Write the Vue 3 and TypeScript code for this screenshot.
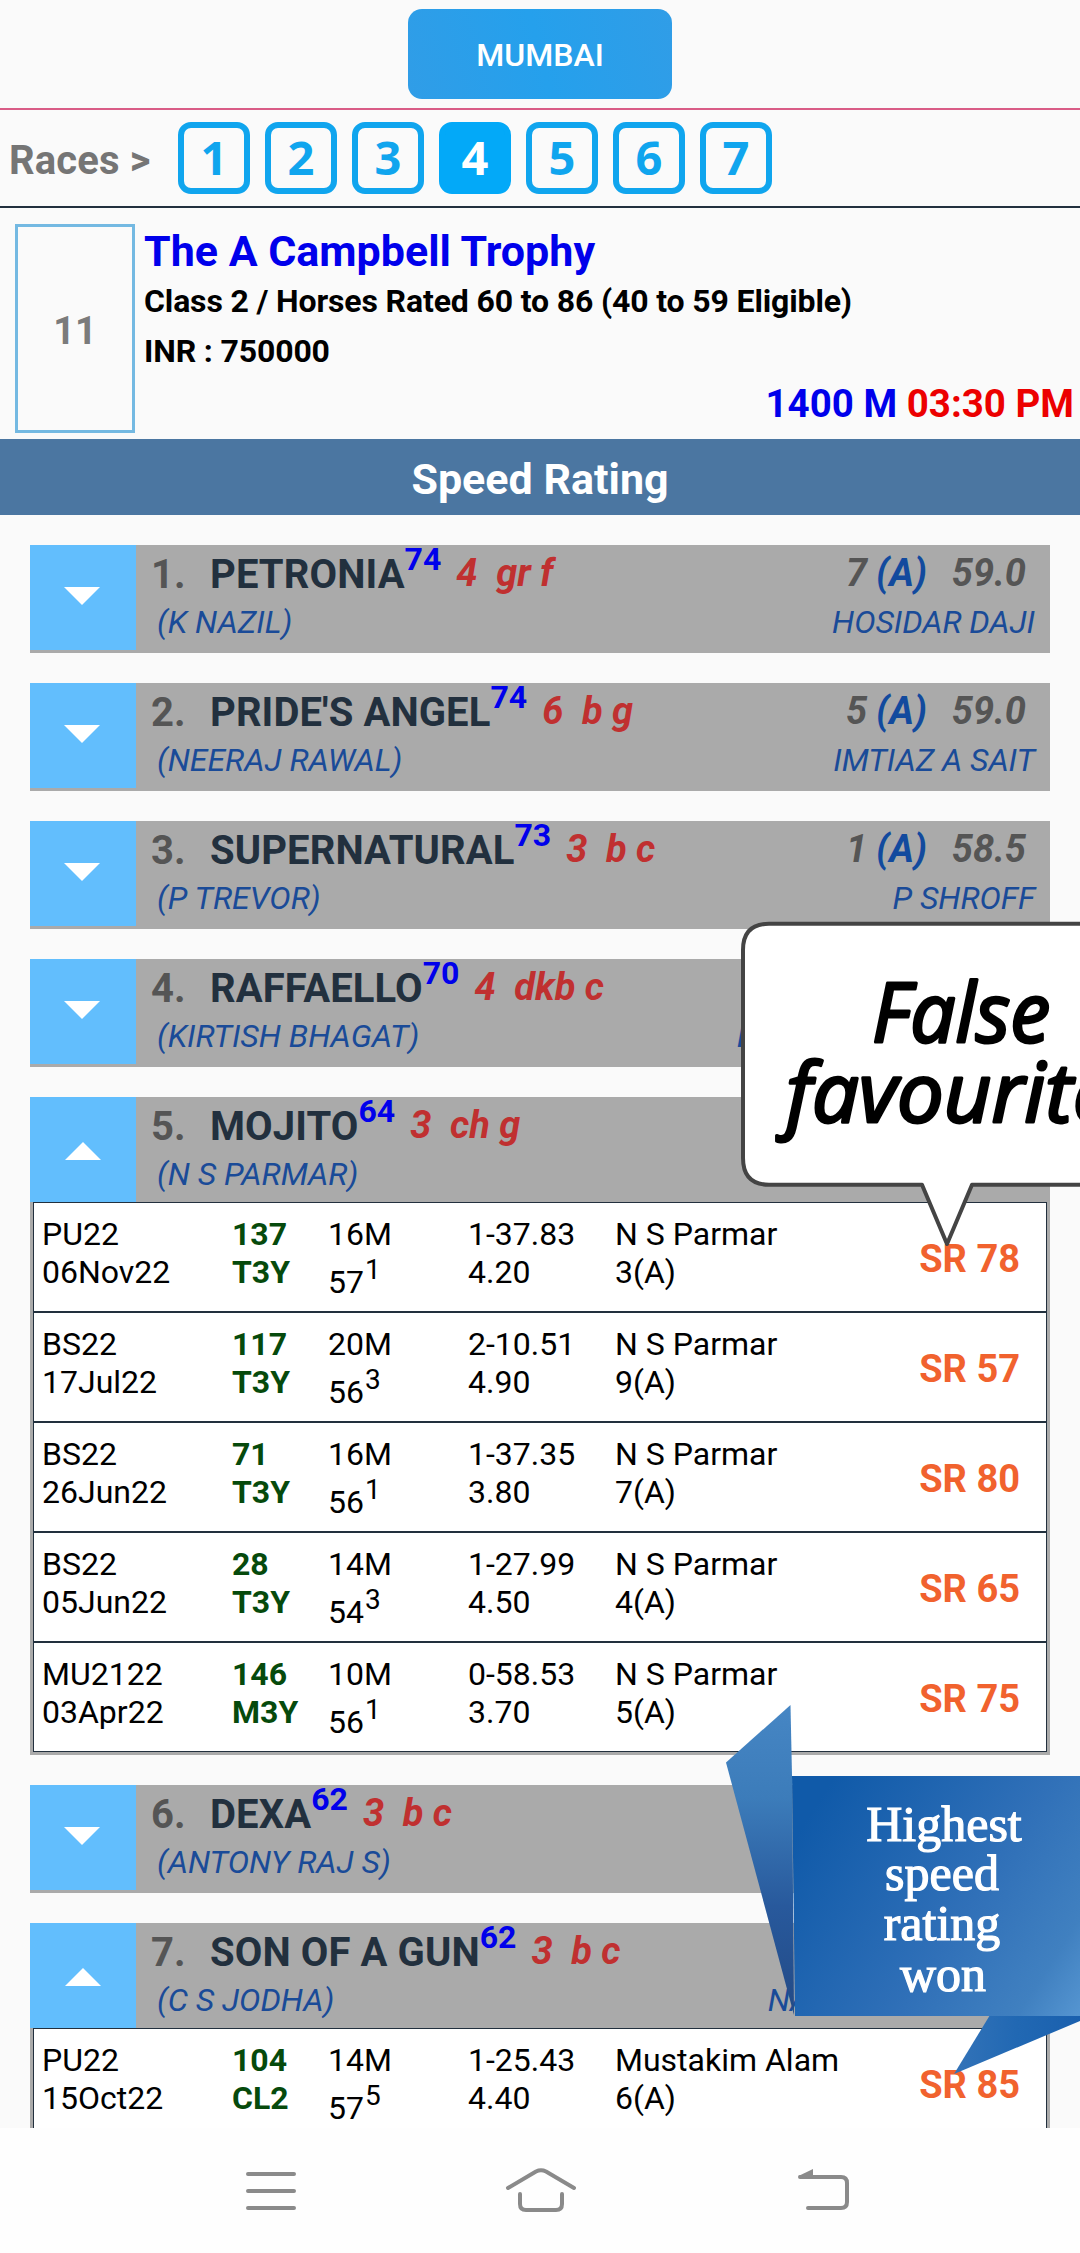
<script setup lang="ts">
interface Run {
  meet: string
  date: string
  raceNo: string
  cls: string
  dist: string
  wt: string
  pos: string
  time: string
  odds: string
  jockey: string
  draw: string
  sr: string
}
interface Horse {
  no: number
  name: string
  rating: string
  desc: string
  jockey: string
  draw?: string
  weight?: string
  trainer?: string
  runs?: Run[]
}

const races: number[] = [1, 2, 3, 4, 5, 6, 7]
const activeRace = 4

function run(
  meet: string, date: string, raceNo: string, cls: string, dist: string, wt: string, pos: string,
  time: string, odds: string, jockey: string, draw: string, sr: string,
): Run {
  return { meet, date, raceNo, cls, dist, wt, pos, time, odds, jockey, draw, sr }
}

const horses: Horse[] = [
  { no: 1, name: 'PETRONIA', rating: '74', desc: '4  gr f', jockey: '(K NAZIL)', draw: '7', weight: '59.0', trainer: 'HOSIDAR DAJI' },
  { no: 2, name: "PRIDE'S ANGEL", rating: '74', desc: '6  b g', jockey: '(NEERAJ RAWAL)', draw: '5', weight: '59.0', trainer: 'IMTIAZ A SAIT' },
  { no: 3, name: 'SUPERNATURAL', rating: '73', desc: '3  b c', jockey: '(P TREVOR)', draw: '1', weight: '58.5', trainer: 'P SHROFF' },
  { no: 4, name: 'RAFFAELLO', rating: '70', desc: '4  dkb c', jockey: '(KIRTISH BHAGAT)', trainer: 'DALLAS TODYWALLA' },
  {
    no: 5, name: 'MOJITO', rating: '64', desc: '3  ch g', jockey: '(N S PARMAR)',
    runs: [
      run('PU22', '06Nov22', '137', 'T3Y', '16M', '57', '1', '1-37.83', '4.20', 'N S Parmar', '3(A)', 'SR 78'),
      run('BS22', '17Jul22', '117', 'T3Y', '20M', '56', '3', '2-10.51', '4.90', 'N S Parmar', '9(A)', 'SR 57'),
      run('BS22', '26Jun22', '71', 'T3Y', '16M', '56', '1', '1-37.35', '3.80', 'N S Parmar', '7(A)', 'SR 80'),
      run('BS22', '05Jun22', '28', 'T3Y', '14M', '54', '3', '1-27.99', '4.50', 'N S Parmar', '4(A)', 'SR 65'),
      run('MU2122', '03Apr22', '146', 'M3Y', '10M', '56', '1', '0-58.53', '3.70', 'N S Parmar', '5(A)', 'SR 75'),
    ],
  },
  { no: 6, name: 'DEXA', rating: '62', desc: '3  b c', jockey: '(ANTONY RAJ S)' },
  {
    no: 7, name: 'SON OF A GUN', rating: '62', desc: '3  b c', jockey: '(C S JODHA)', trainer: 'NARENDRA LAGAD',
    runs: [
      run('PU22', '15Oct22', '104', 'CL2', '14M', '57', '5', '1-25.43', '4.40', 'Mustakim Alam', '6(A)', 'SR 85'),
    ],
  },
]
</script>

<template>
  <div class="screen">
    <div class="page">
      <header class="venue"><button class="venue-btn">MUMBAI</button></header>

      <nav class="races">
        <span class="races-label">Races &gt;</span>
        <div class="race-list">
          <span v-for="r in races" :key="r" class="race" :class="{ active: r === activeRace }">{{ r }}</span>
        </div>
      </nav>

      <section class="info">
        <div class="info-box">11</div>
        <div class="info-text">
          <h1>The A Campbell Trophy</h1>
          <p>Class 2 / Horses Rated 60 to 86 (40 to 59 Eligible)</p>
          <p class="inr">INR : 750000</p>
          <div class="when"><span class="blue">1400 M</span> <span class="red">03:30 PM</span></div>
        </div>
      </section>

      <h2 class="section-title">Speed Rating</h2>

      <main class="cards">
        <article v-for="h in horses" :key="h.no" class="card">
          <div class="head">
            <div class="toggle">
              <svg v-if="h.runs" class="up" width="36" height="18" viewBox="0 0 36 18"><path d="M0 18L18 0L36 18Z" fill="#fff" /></svg>
              <svg v-else width="36" height="18" viewBox="0 0 36 18"><path d="M0 0L18 18L36 0Z" fill="#fff" /></svg>
            </div>
            <div class="left">
              <div class="line1"><span class="no">{{ h.no }}.</span><span class="name">{{ h.name }}</span><span class="rating">{{ h.rating }}</span><span class="desc">{{ h.desc }}</span></div>
              <div class="jockey">{{ h.jockey }}</div>
            </div>
            <div class="right">
              <div class="line1r"><template v-if="h.draw"><span>{{ h.draw }}</span><span class="a">(A)</span><span class="wt">{{ h.weight }}</span></template></div>
              <div class="trainer">{{ h.trainer }}</div>
            </div>
          </div>
          <div v-if="h.runs" class="runs">
            <div v-for="r in h.runs" :key="r.date" class="run">
              <div>{{ r.meet }}<br>{{ r.date }}</div>
              <div class="green">{{ r.raceNo }}<br>{{ r.cls }}</div>
              <div>{{ r.dist }}<div class="carried">{{ r.wt }}<span class="pos">{{ r.pos }}</span></div></div>
              <div>{{ r.time }}<br>{{ r.odds }}</div>
              <div class="rider">{{ r.jockey }}<br>{{ r.draw }}</div>
              <div class="sr">{{ r.sr }}</div>
            </div>
          </div>
        </article>
      </main>

      <svg class="bubble" width="345" height="330" viewBox="735 916 345 330">
        <path d="M1090 923.8H769Q743 923.8 743 950V1158Q743 1184.7 769 1184.7H922L947 1244L972 1184.7H1090Z" fill="#fff" stroke="#444" stroke-width="4" stroke-linejoin="round" />
        <text class="hand" x="872" y="1042" textLength="178" lengthAdjust="spacingAndGlyphs">False</text>
        <text class="hand" x="786" y="1122" textLength="328" lengthAdjust="spacingAndGlyphs">favourite</text>
      </svg>

      <svg class="ribbon" width="360" height="380" viewBox="720 1700 360 380">
        <defs>
          <linearGradient id="fold" x1="0" y1="0" x2="0" y2="1">
            <stop offset="0" stop-color="#4686c4" />
            <stop offset=".3" stop-color="#3c7cba" />
            <stop offset=".65" stop-color="#28599c" />
            <stop offset="1" stop-color="#234a86" />
          </linearGradient>
          <linearGradient id="face" gradientUnits="userSpaceOnUse" x1="800" y1="1830" x2="1080" y2="2010">
            <stop offset="0" stop-color="#105aa9" />
            <stop offset=".55" stop-color="#3070b8" />
            <stop offset=".85" stop-color="#4080c0" />
            <stop offset="1" stop-color="#5494d0" />
          </linearGradient>
          <linearGradient id="tail" x1="0" y1="0" x2="1" y2="0">
            <stop offset="0" stop-color="#3373b8" />
            <stop offset=".5" stop-color="#2168b3" />
            <stop offset="1" stop-color="#1a60ae" />
          </linearGradient>
        </defs>
        <path d="M790.5 1705L726 1762.5L794 2015L792 1776Z" fill="url(#fold)" />
        <path d="M990 2015H1080V2021L954 2074Z" fill="url(#tail)" />
        <path d="M792 1776H1080V2016H795Z" fill="url(#face)" />
        <g class="won">
          <text x="944" y="1841">Highest</text>
          <text x="942" y="1890">speed</text>
          <text x="942" y="1940">rating</text>
          <text x="943" y="1991">won</text>
        </g>
      </svg>
    </div>

    <footer class="sysnav">
      <svg width="1080" height="125" viewBox="0 2128 1080 125" fill="none" stroke="#8a8a8a" stroke-width="4" stroke-linecap="round" stroke-linejoin="round">
        <path d="M248 2174H294M248 2191H294M248 2208H294" />
        <path d="M508 2188L536 2171.5Q541 2169 546 2171.5L574 2188" />
        <path d="M520 2194V2204Q520 2210 526 2210H556Q562 2210 562 2204V2194" />
        <path d="M800 2177H841Q847 2177 847 2183V2202Q847 2208 841 2208H808" />
        <path d="M798.5 2176L813 2169V2178Z" fill="#8a8a8a" stroke="none" />
      </svg>
    </footer>
  </div>
</template>

<style>
body { margin: 0; background: #fafafa; }
</style>

<style scoped>
.screen {
  width: 1080px;
  height: 2253px;
  display: flex;
  flex-direction: column;
  overflow: hidden;
  background: #fafafa;
  font-family: Roboto, "Liberation Sans", sans-serif;
  color: #000;
}
.page {
  position: relative;
  height: 2128px;
  flex: none;
  overflow: hidden;
}
.venue {
  height: 108px;
  box-sizing: border-box;
  padding-top: 9px;
  display: flex;
  justify-content: center;
  align-items: flex-start;
}
.venue-btn {
  width: 264px;
  height: 90px;
  border: 0;
  border-radius: 14px;
  padding: 2px 0 0;
  background: linear-gradient(75deg, #309de7, #25a0ec 50%, #309de7);
  color: #fff;
  font: 500 32px Roboto, sans-serif;
}
.races {
  height: 100px;
  box-sizing: border-box;
  border-top: 2px solid #d95c86;
  border-bottom: 2px solid #22303e;
  display: flex;
  align-items: center;
}
.races-label {
  width: 169px;
  padding-left: 9px;
  padding-top: 5px;
  font-size: 40px;
  font-weight: 700;
  letter-spacing: .15px;
  color: #757575;
}
.race-list { display: flex; gap: 15px; }
.race {
  width: 72px;
  height: 72px;
  box-sizing: border-box;
  border: 6px solid #10a5ee;
  border-radius: 13px;
  color: #10a5ee;
  font: 700 47px/58px "Noto Sans", sans-serif;
  text-align: center;
}
.race.active { background: #03a9f8; border-color: #03a9f8; color: #fff; }
.info {
  height: 231px;
  box-sizing: border-box;
  padding: 16px 6px 0 15px;
  display: flex;
  gap: 8px;
}
.info-box {
  width: 120px;
  height: 209px;
  flex: none;
  box-sizing: border-box;
  border: 3px solid #74b9e2;
  color: #7b7b7b;
  font-size: 38px;
  font-weight: 700;
  line-height: 209px;
  text-align: center;
}
.info-text { flex: 1; min-width: 0; }
h1 { margin: 0; padding-left: 1px; font-size: 43px; line-height: 55px; font-weight: 700; color: #0000eb; }
p { margin: 0; padding-left: 1px; font-size: 32px; line-height: 45px; font-weight: 700; letter-spacing: -.14px; }
.inr { line-height: 54px; }
.when { margin-top: 6px; font-size: 38.5px; line-height: 40px; font-weight: 700; text-align: right; }
.blue { color: #0000eb; }
.red { color: #ec0000; }
.section-title {
  margin: 0;
  height: 76px;
  background: #4b76a1;
  color: #fff;
  font-size: 43px;
  line-height: 81px;
  font-weight: 700;
  text-align: center;
}
.cards { padding: 30px; display: flex; flex-direction: column; gap: 30px; }
.card { background: #aaa; padding-bottom: 3px; }
.head { height: 105px; display: flex; }
.toggle {
  width: 105.5px;
  flex: none;
  background: #62befd;
  display: flex;
  justify-content: center;
  align-items: flex-start;
}
.toggle svg { margin: 42px 2px 0 0; }
.toggle svg.up { margin: 45px 0 0 0; }
.left { padding: 1px 0 0 15.5px; white-space: pre; }
.line1 { height: 58px; line-height: 58px; font-size: 40px; font-weight: 700; color: #22303e; }
.no { display: inline-block; width: 59px; color: #555; }
.name { letter-spacing: .1px; }
.rating { font-size: 32px; line-height: 0; vertical-align: 18px; color: #0000eb; }
.desc { margin-left: 15px; font-size: 38px; line-height: 0; vertical-align: 2px; font-style: italic; color: #c03030; }
.jockey { padding-left: 6px; font-size: 32px; line-height: 37.5px; font-style: italic; color: #1a4b98; }
.right { margin-left: auto; text-align: right; padding: 1px 15px 0 0; white-space: pre; }
.line1r { height: 58px; padding-right: 9px; font-size: 38px; line-height: 55px; font-weight: 700; font-style: italic; color: #555; }
.a { margin-left: 9px; color: #124a9e; }
.wt { margin-left: 25px; }
.trainer { font-size: 32px; line-height: 37.5px; font-style: italic; letter-spacing: -.05px; color: #1a4b98; }
.runs { margin: 0 3px; }
.run {
  height: 110px;
  box-sizing: border-box;
  border: 1px solid #22303e;
  background: #fff;
  padding: 12px 26px 0 8px;
  display: grid;
  grid-template-columns: 190px 96px 140px 147px 1fr auto;
  font-size: 32px;
  line-height: 38px;
}
.green { font-weight: 700; color: #064a0c; }
.carried { padding-top: 10px; }
.pos { font-size: 28px; line-height: 0; vertical-align: 14px; margin-left: 1px; }
.rider { white-space: nowrap; }
.sr { font-size: 38px; line-height: 88px; font-weight: 700; color: #f1622e; }
.bubble { position: absolute; left: 735px; top: 916px; }
.hand {
  font-family: "Open Sans", "Noto Sans", sans-serif;
  font-size: 82px;
  font-weight: 500;
  font-style: italic;
  stroke: #000;
  stroke-width: 3;
  stroke-linejoin: round;
}
.ribbon { position: absolute; left: 720px; top: 1700px; }
.won {
  font-family: "Liberation Serif", serif;
  font-size: 50px;
  fill: #fff;
  stroke: #fff;
  stroke-width: 1.2;
  text-anchor: middle;
}
.sysnav { height: 125px; background: #fefefe; }
.sysnav svg { display: block; }
</style>
